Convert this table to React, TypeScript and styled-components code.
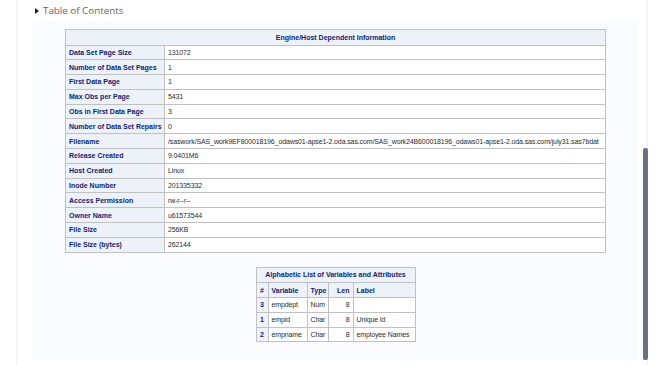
import * as React from 'react';
import styled, { createGlobalStyle } from 'styled-components';

const GlobalStyle = createGlobalStyle`
  html, body {
    margin: 0;
    padding: 0;
    background: #ffffff;
    overflow: hidden;
  }
  body {
    font-family: "Liberation Sans", Arial, sans-serif;
  }
`;

const Page = styled.div`
  position: relative;
  width: 655px;
  height: 365px;
  overflow: hidden;
`;

const Frame = styled.div`
  margin-left: 16px;
  width: 632px;
  height: 365px;
  border-left: 1px solid #f0f1f3;
  border-right: 1px solid #f0f1f3;
  box-sizing: border-box;
  display: flex;
  flex-direction: column;
`;

const TocLine = styled.div`
  display: flex;
  align-items: center;
  gap: 4px;
  height: 22px;
  padding-left: 18px;
  padding-bottom: 1px;
  box-sizing: border-box;
  font-family: "Open Sans", "Liberation Sans", sans-serif;
  font-size: 9.8px;
  color: #5f646b;
`;

const Caret = styled.span`
  width: 0;
  height: 0;
  border-top: 3px solid transparent;
  border-bottom: 3px solid transparent;
  border-left: 4px solid #222;
`;

const Panel = styled.div`
  margin-left: 16px;
  width: 605px;
  height: 338px;
  background: #fafbfe;
  display: flex;
  flex-direction: column;
  align-items: center;
  gap: 14px;
  padding-top: 7px;
  box-sizing: border-box;
`;

const Table = styled.table<{ $width: number }>`
  width: ${(p) => p.$width}px;
  border-collapse: collapse;
  border: 1px solid #c1c1c1;
  table-layout: fixed;
  font-size: 7px;
  background: #ffffff;
`;

const Caption = styled.th`
  height: 14.5px;
  background: #edf2f9;
  color: #112277;
  font-weight: bold;
  text-align: center;
  border: 1px solid #c1c1c1;
  padding: 0 3px;
`;

const HeadCell = styled.th<{ $align?: string }>`
  height: 13.8px;
  background: #edf2f9;
  color: #112277;
  font-weight: bold;
  text-align: ${(p) => p.$align || 'left'};
  border: 1px solid #c1c1c1;
  padding: 0 3px;
  white-space: nowrap;
  overflow: hidden;
`;

const Cell = styled.td<{ $align?: string }>`
  height: 13.8px;
  color: #2b2b2b;
  text-align: ${(p) => p.$align || 'left'};
  border: 1px solid #c1c1c1;
  padding: 0 3px;
  white-space: nowrap;
  overflow: hidden;
  letter-spacing: -0.12px;
`;

const ScrollThumb = styled.div`
  position: absolute;
  left: 643px;
  top: 148px;
  width: 5px;
  height: 212px;
  border-radius: 2px;
  background: #6b7180;
`;

const engineRows: [string, string][] = [
  ['Data Set Page Size', '131072'],
  ['Number of Data Set Pages', '1'],
  ['First Data Page', '1'],
  ['Max Obs per Page', '5431'],
  ['Obs in First Data Page', '3'],
  ['Number of Data Set Repairs', '0'],
  [
    'Filename',
    '/saswork/SAS_work9EF800018196_odaws01-apse1-2.oda.sas.com/SAS_work24B600018196_odaws01-apse1-2.oda.sas.com/july31.sas7bdat',
  ],
  ['Release Created', '9.0401M6'],
  ['Host Created', 'Linux'],
  ['Inode Number', '201335332'],
  ['Access Permission', 'rw-r--r--'],
  ['Owner Name', 'u61573544'],
  ['File Size', '256KB'],
  ['File Size (bytes)', '262144'],
];

const variables = [
  { num: '3', name: 'empdept', type: 'Num', len: '8', label: '' },
  { num: '1', name: 'empid', type: 'Char', len: '8', label: 'Unique Id' },
  { num: '2', name: 'empname', type: 'Char', len: '8', label: 'employee Names' },
];

export default function App() {
  return (
    <Page>
      <GlobalStyle />
      <Frame>
        <TocLine>
          <Caret />
          <span>Table of Contents</span>
        </TocLine>
        <Panel>
          <Table $width={541}>
            <colgroup>
              <col style={{ width: 99 }} />
              <col />
            </colgroup>
            <thead>
              <tr>
                <Caption colSpan={2}>Engine/Host Dependent Information</Caption>
              </tr>
            </thead>
            <tbody>
              {engineRows.map(([k, v]) => (
                <tr key={k}>
                  <HeadCell>{k}</HeadCell>
                  <Cell>{v}</Cell>
                </tr>
              ))}
            </tbody>
          </Table>

          <Table $width={160}>
            <colgroup>
              <col style={{ width: 12 }} />
              <col style={{ width: 39 }} />
              <col style={{ width: 21 }} />
              <col style={{ width: 25 }} />
              <col />
            </colgroup>
            <thead>
              <tr>
                <Caption colSpan={5}>Alphabetic List of Variables and Attributes</Caption>
              </tr>
              <tr>
                <HeadCell $align="center">#</HeadCell>
                <HeadCell>Variable</HeadCell>
                <HeadCell>Type</HeadCell>
                <HeadCell $align="right">Len</HeadCell>
                <HeadCell>Label</HeadCell>
              </tr>
            </thead>
            <tbody>
              {variables.map((v) => (
                <tr key={v.name}>
                  <HeadCell $align="center">{v.num}</HeadCell>
                  <Cell>{v.name}</Cell>
                  <Cell>{v.type}</Cell>
                  <Cell $align="right">{v.len}</Cell>
                  <Cell>{v.label}</Cell>
                </tr>
              ))}
            </tbody>
          </Table>
        </Panel>
      </Frame>
      <ScrollThumb />
    </Page>
  );
}
